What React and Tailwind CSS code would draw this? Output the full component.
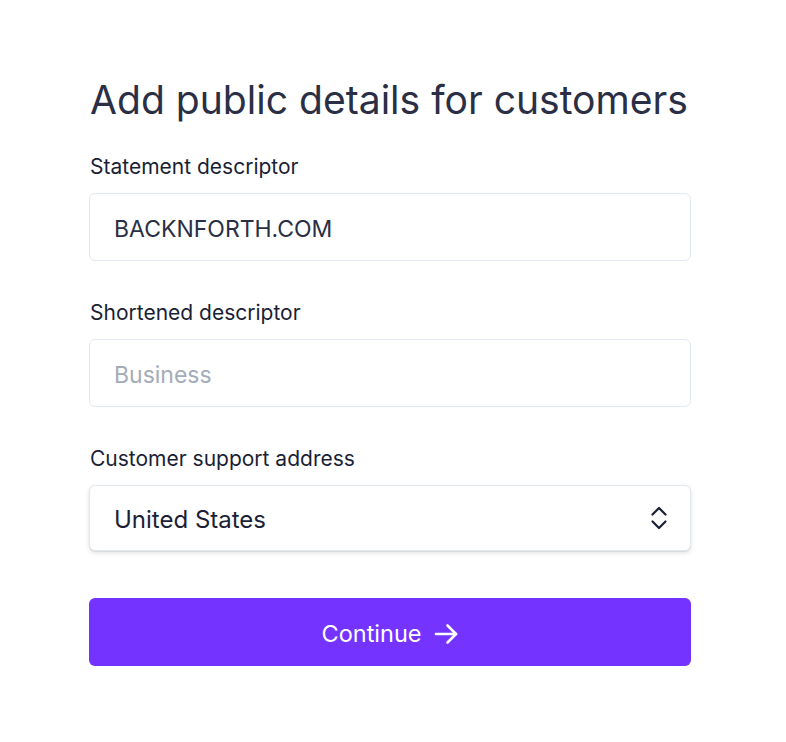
import React, { useState } from 'react';

function Field({ label, children, className }) {
    return (
        <div className={className}>
            <label className="block text-[21px] leading-[28px] text-[#1a1f36] mb-[12px] ml-[1px] pt-[1px]">{label}</label>
            {children}
        </div>
    );
}

export default function App() {
    const [statement, setStatement] = useState('BACKNFORTH.COM');
    const [shortened, setShortened] = useState('');

    return (
        <div className="min-h-screen bg-white" style={{ fontFamily: 'Inter, "Noto Sans", sans-serif' }}>
            <div className="w-[602px] ml-[89px] pt-[76px]">
                <h1 className="text-[39.1px] leading-[48px] text-[#2a2f45] ml-[1px] whitespace-nowrap">
                    Add public details for customers
                </h1>

                <Field label="Statement descriptor" className="mt-[28px]">
                    <input
                        type="text"
                        value={statement}
                        onChange={(e) => setStatement(e.target.value)}
                        className="w-[602px] h-[68px] px-[24px] pt-[3px] rounded-[6px] border border-[#e3e8ee] text-[23px] text-[#2a2f45] focus:outline-none"
                    />
                </Field>

                <Field label="Shortened descriptor" className="mt-[37px]">
                    <input
                        type="text"
                        placeholder="Business"
                        value={shortened}
                        onChange={(e) => setShortened(e.target.value)}
                        className="w-[602px] h-[68px] px-[24px] pt-[3px] rounded-[6px] border border-[#e3e8ee] text-[23px] text-[#2a2f45] placeholder:text-[#a3acb9] focus:outline-none"
                    />
                </Field>

                <Field label="Customer support address" className="mt-[37px]">
                    <div className="relative w-[602px] h-[66px] rounded-[6px] border border-[#e3e8ee] bg-white shadow-[0_2px_5px_rgba(60,66,87,0.14),0_1px_1px_rgba(0,0,0,0.08)] flex items-center px-[24px] pt-[3px]">
                        <span className="text-[24px] text-[#1a1f36]">United States</span>
                        <svg className="absolute right-[22px] top-1/2 -translate-y-1/2" width="18" height="28" viewBox="0 0 18 28" fill="none" stroke="#1a1f36" strokeWidth="2.2" strokeLinecap="round" strokeLinejoin="round">
                            <path d="M2.5 10.5l6.5-6.5 6.5 6.5" />
                            <path d="M2.5 17.5l6.5 6.5 6.5-6.5" />
                        </svg>
                    </div>
                </Field>

                <button className="mt-[47px] w-[602px] h-[68px] rounded-[6px] bg-[#7433ff] text-white text-[23.5px] flex items-center justify-center gap-[12px] pt-[3px]">
                    <span>Continue</span>
                    <svg width="25" height="24" viewBox="0 0 25 24" fill="none" stroke="white" strokeWidth="2.6" strokeLinecap="round" strokeLinejoin="round">
                        <path d="M2 12h20" />
                        <path d="M13.5 3.5l8.5 8.5-8.5 8.5" />
                    </svg>
                </button>
            </div>
        </div>
    );
}
